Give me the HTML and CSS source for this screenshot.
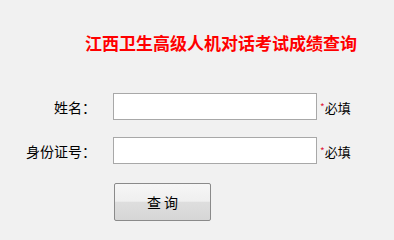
FILE: index.html
```html
<!DOCTYPE html>
<html lang="zh-CN">
<head>
<meta charset="utf-8">
<title>江西卫生高级人机对话考试成绩查询</title>
<link rel="stylesheet" href="styles.css">
</head>
<body>
<div class="page">
  <h1 class="title">江西卫生高级人机对话考试成绩查询</h1>
  <form class="form">
    <div class="row">
      <label class="label">姓名：</label>
      <input class="field" type="text">
      <span class="req"><span class="star">*</span>必填</span>
    </div>
    <div class="row">
      <label class="label">身份证号：</label>
      <input class="field" type="text">
      <span class="req"><span class="star">*</span>必填</span>
    </div>
    <div class="actions">
      <button class="btn" type="button">查 询</button>
    </div>
  </form>
</div>
</body>
</html>
```
FILE: styles.css
```css
html, body {
  margin: 0;
  padding: 0;
  background: #f1f1f1;
}
body {
  font-family: "Noto Sans CJK SC", "Liberation Sans", sans-serif;
  color: #000;
}
.page {
  width: 394px;
  height: 240px;
  overflow: hidden;
}
.title {
  margin: 0;
  padding: 34px 0 0 85px;
  font-size: 17px;
  line-height: 18px;
  font-weight: bold;
  color: #ff0000;
  white-space: nowrap;
}
.form {
  margin: 0;
  padding-top: 41px;
  display: flex;
  flex-direction: column;
  gap: 17px;
}
.row {
  display: flex;
  align-items: center;
  height: 27px;
}
.label {
  width: 96px;
  text-align: right;
  font-size: 14px;
  line-height: 16px;
  margin-right: 17px;
}
.field {
  box-sizing: border-box;
  width: 204px;
  height: 27px;
  margin: 0;
  border: 1px solid #a8a8a8;
  background: #fff;
  padding: 0 4px;
}
.req {
  margin-left: 3px;
  font-size: 13px;
  line-height: 15px;
  white-space: nowrap;
}
.star {
  color: #e0203a;
  font-size: 10px;
  vertical-align: 2px;
  margin-right: 0;
}
.actions {
  padding: 2px 0 0 114px;
}
.btn {
  box-sizing: border-box;
  width: 97px;
  height: 38px;
  margin: 0;
  border: 1px solid #8a8a8a;
  border-radius: 2px;
  background: linear-gradient(to bottom, #f6f6f6 0%, #efefef 48%, #dedede 50%, #d6d6d6 100%);
  font-family: "Noto Sans CJK SC", sans-serif;
  font-size: 14px;
  color: #000;
  padding: 0;
}
```
